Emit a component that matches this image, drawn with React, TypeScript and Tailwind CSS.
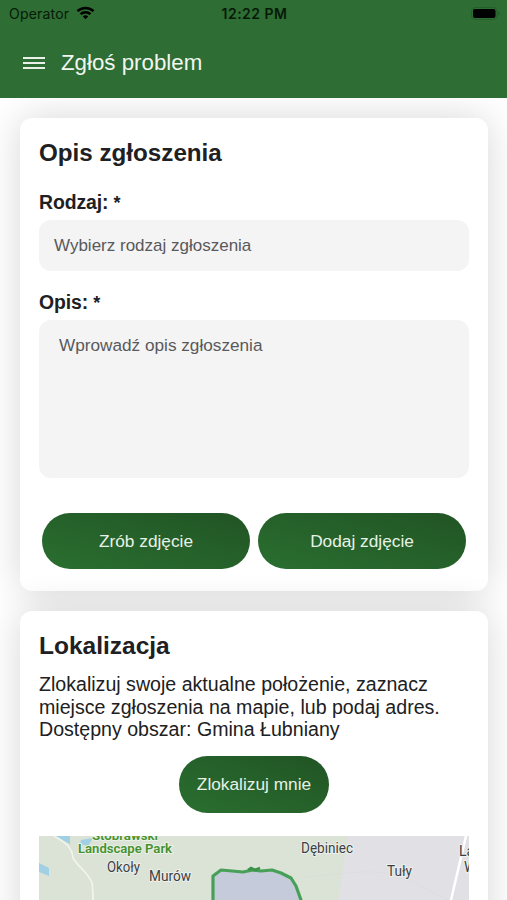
import React from 'react';

const StatusBar = () => (
  <div className="grid h-7 grid-cols-[1fr_auto_1fr] items-center pl-[9px] pr-[6px] font-['Inter',sans-serif] text-[14px] text-[#071a08]">
    <div className="flex h-7 items-center gap-[7px]">
      <span className="-mt-px tracking-[0.2px]">Operator</span>
      <svg className="-mt-[2px] h-[14px] w-[19px]" viewBox="0 0 18 14" fill="none" stroke="#000" strokeWidth="2.5">
        <path d="M1 5.1C5.3.8 12.7.8 17 5.1" />
        <path d="M4.1 8.2c2.7-2.7 7.1-2.7 9.8 0" />
        <path d="M9 13.2 6.3 10.4c1.5-1.4 3.9-1.4 5.4 0z" fill="#000" stroke="none" />
      </svg>
    </div>
    <span className="-mt-px mr-[1px] text-[14px] font-semibold tracking-[0.5px]">12:22 PM</span>
    <svg className="-mt-[2px] h-[13px] w-[30px] justify-self-end" viewBox="0 0 30 13">
      <rect x="0.5" y="0.5" width="25.5" height="12" rx="3.5" fill="none" stroke="#25602b" />
      <rect x="2" y="2" width="22.5" height="9" rx="2" fill="#000" />
      <path d="M27.5 4.5c1.4.6 1.4 3.4 0 4z" fill="#1f5525" />
    </svg>
  </div>
);

const Header = () => (
  <header className="h-[98px] bg-[#2e6d33]">
    <StatusBar />
    <div className="flex h-[69px] items-center gap-4 pl-[23px]">
      <button className="flex w-[22px] flex-col gap-[3px]" aria-label="Menu">
        <span className="h-[2px] w-full bg-[#e9f1e9]"></span>
        <span className="h-[2px] w-full bg-[#e9f1e9]"></span>
        <span className="h-[2px] w-full bg-[#e9f1e9]"></span>
      </button>
      <h1 className="pt-px text-[22.3px] text-[#f0f6f0]">Zgłoś problem</h1>
    </div>
  </header>
);

const Button = ({ className, children }: { className: string; children: React.ReactNode }) => (
  <button
    className={`rounded-full bg-linear-to-tr from-[#2a6f30] to-[#215424] pt-[2px] text-[17.3px] text-[#e6f2e6] ${className}`}
  >
    {children}
  </button>
);

const Map = () => (
  <svg
    className="mt-[23px] block h-[160px] w-full"
    viewBox="0 0 430 160"
    fontFamily="Roboto, sans-serif"
    fontSize="13"
    fill="#3c3f42"
  >
    <rect width="430" height="160" fill="#dae3d5" />
    <path d="M309 0H430V160H292L299 64 303 38Z" fill="#e1e1e5" />
    <path d="M15 0H31V8ZM42 4 54 2 49 10 41 8ZM0 27 10 32V40L0 36Z" fill="#a1cfe3" />
    <path
      d="M15 0C26 6 33 11 34 22c5 9 15 14 19 25 2 12 0 30 3 60"
      fill="none"
      stroke="#f1f4eb"
      strokeWidth="1.8"
    />
    <path d="M262 42C300 38 325 33 352 38S385 55 410 64" fill="none" stroke="#d8dddc" strokeWidth="0.8" />
    <path d="M427 0 412 64 398 120" fill="none" stroke="#fff" strokeWidth="2.5" />
    <path
      d="M174 120V40L182 34 193 35 204 36 214 34 222 35 233 34 242 37 252 42 257 50 262 64 270 120"
      fill="#c5cbda"
      stroke="#48a058"
      strokeWidth="3.2"
      strokeLinejoin="round"
    />
    <path d="M209 34 212 32 216 34 221 32" fill="none" stroke="#3b924b" strokeWidth="2.6" />
    <g fontWeight="600" fill="#45912f" stroke="#e9f0e4" strokeWidth="2" paintOrder="stroke">
      <text x="53" y="4" textLength="66" lengthAdjust="spacingAndGlyphs">Stobrawski</text>
      <text x="39" y="17" textLength="94" lengthAdjust="spacingAndGlyphs">Landscape Park</text>
    </g>
    <g stroke="#edf0ec" strokeWidth="1.8" paintOrder="stroke" fontSize="14">
      <text x="68" y="36" textLength="33" lengthAdjust="spacingAndGlyphs">Okoły</text>
      <text x="110" y="45" textLength="42" lengthAdjust="spacingAndGlyphs">Murów</text>
      <text x="262" y="17" textLength="52" lengthAdjust="spacingAndGlyphs">Dębiniec</text>
      <text x="348" y="40" textLength="25" lengthAdjust="spacingAndGlyphs">Tuły</text>
      <text x="420" y="20">La</text>
      <text x="425" y="36">W</text>
    </g>
  </svg>
);

const cardClass = 'rounded-[12px] bg-white px-[19px] shadow-[0_0_38px_rgba(0,0,0,0.16)]';

const App = () => {
  return (
    <div className="h-[900px] w-[507px] overflow-hidden bg-white font-['Liberation_Sans',Arial,sans-serif] text-[#202022]">
      <Header />
      <main className="flex h-[802px] flex-col gap-5 overflow-hidden pl-5 pr-[19px] pt-5">
        <section className={`h-[473px] shrink-0 ${cardClass}`}>
          <h2 className="pt-[19px] text-[24.2px] font-bold leading-8">Opis zgłoszenia</h2>

          <label className="mt-[21px] block h-6 text-[19.4px] font-bold leading-[25px] tracking-[-0.1px]">
            Rodzaj: <span className="text-[18px] leading-none">*</span>
          </label>
          <div className="mt-[6px] flex h-[51px] items-center rounded-[12px] bg-[#f4f4f4] px-[15px] text-[17px] text-[#59595b]">
            Wybierz rodzaj zgłoszenia
          </div>

          <label className="mt-[19px] block h-6 text-[19.4px] font-bold leading-6 tracking-[-0.1px]">
            Opis: <span className="text-[18px] leading-none">*</span>
          </label>
          <div className="mt-[6px] h-[158px] rounded-[12px] bg-[#f4f4f4] px-5 pt-[13px] text-[17.2px] leading-6 text-[#59595b]">
            Wprowadź opis zgłoszenia
          </div>

          <div className="mt-[35px] flex gap-2 px-[3px]">
            <Button className="h-[56px] flex-1">Zrób zdjęcie</Button>
            <Button className="h-[56px] flex-1">Dodaj zdjęcie</Button>
          </div>
        </section>

        <section className={`h-[420px] shrink-0 ${cardClass}`}>
          <h2 className="pt-[19px] text-[24.5px] font-bold leading-8">Lokalizacja</h2>
          <p className="mt-[11px] whitespace-nowrap text-[19.6px] leading-[22.6px]">
            Zlokalizuj swoje aktualne położenie, zaznacz
            <br />
            miejsce zgłoszenia na mapie, lub podaj adres.
            <br />
            Dostępny obszar: Gmina Łubniany
          </p>
          <div className="mt-[15px] flex justify-center">
            <Button className="h-[57px] w-[150px]">Zlokalizuj mnie</Button>
          </div>
          <Map />
        </section>
      </main>
    </div>
  );
};

export default App;
